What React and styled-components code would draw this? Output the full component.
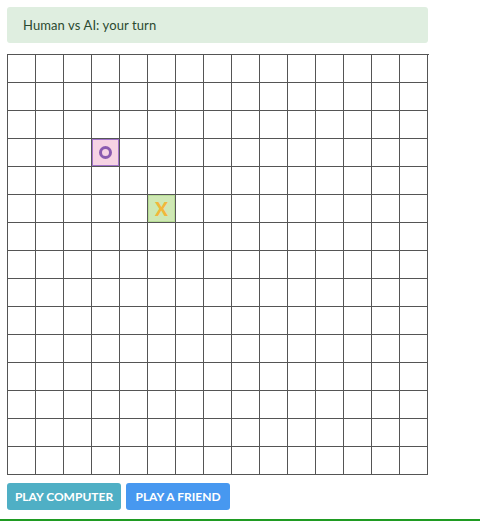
import React from 'react'
import styled, {createGlobalStyle} from 'styled-components'

const Global=createGlobalStyle`
  html, body { margin: 0; padding: 0; background: #fff; }
  body { font-family: "Lato", "Liberation Sans", sans-serif; }
`

const Page=styled.div`
  box-sizing: border-box;
  height: 521px;
  padding: 7px 7px 0;
  border-bottom: 2px solid #1f9b22;
`
const Status=styled.div`
  box-sizing: border-box;
  width: 421px;
  height: 36px;
  padding: 0 16px;
  display: flex;
  align-items: center;
  background: #dfeee0;
  border-radius: 3px;
  color: #2b4a30;
  font-size: 13px;
  letter-spacing: 0.1px;
`
const Board=styled.div`
  margin-top: 11px;
  display: grid;
  grid-template-columns: repeat(15, 28px);
  grid-auto-rows: 28px;
  width: 421px;
  border-left: 1px solid #555;
  border-top: 1px solid #555;
`
const Cell=styled.div`
  box-sizing: border-box;
  border-right: 1px solid #555;
  border-bottom: 1px solid #555;
  display: flex;
  align-items: center;
  justify-content: center;
  font-weight: 900;
  font-size: 19px;
  background: ${(p)=>p.mark==='O' ? '#f6d3e4' : p.mark==='X' ? '#cfe8b4' : '#fff'};
  box-shadow: ${(p)=>p.mark==='O' ? 'inset 0 0 0 1px #a273c9' : p.mark==='X' ? 'inset 0 0 0 1px #b7dd96' : 'none'};
  color: ${(p)=>p.mark==='O' ? '#8a5bb0' : '#f2b73a'};
`
const Ring=styled.span`
  width: 7px;
  height: 7px;
  border: 3px solid #8a5bb0;
  border-radius: 50%;
`
const Buttons=styled.div`
  margin-top: 8px;
  display: flex;
  gap: 5px;
`
const Button=styled.button`
  height: 27px;
  width: ${(props)=>props.w}px;
  border: none;
  border-radius: 3px;
  padding: 0;
  color: #fff;
  font-family: "Lato", "Liberation Sans", sans-serif;
  font-weight: 700;
  font-size: 12px;
  background: ${(props)=>props.bg};
  cursor: pointer;
`

const marks={'3-3':'O','5-5':'X'}

const App=()=>{
  const cells=[]
  for(let r=0;r<15;r++){
    for(let c=0;c<15;c++){
      const m=marks[`${r}-${c}`]
      cells.push(
        <Cell key={`${r}-${c}`} mark={m}>
          {m==='O' && <Ring/>}
          {m==='X' && 'X'}
        </Cell>
      )
    }
  }
  return (
    <Page>
      <Global/>
      <Status>Human vs AI: your turn</Status>
      <Board>{cells}</Board>
      <Buttons>
        <Button w={114} bg='#4fafc5'>PLAY COMPUTER</Button>
        <Button w={104} bg='#4798f0'>PLAY A FRIEND</Button>
      </Buttons>
    </Page>
  )
}

export default App
